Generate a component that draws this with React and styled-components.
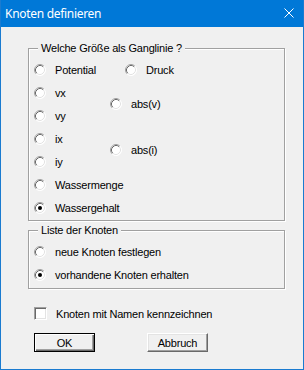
import styled, { createGlobalStyle } from "styled-components";

const GlobalStyle = createGlobalStyle`
  html, body {
    margin: 0;
    padding: 0;
    background: #f0f0f0;
  }
  * {
    box-sizing: border-box;
  }
`;

function RadioMark({ checked }) {
  return (
    <RadioSvg width="12" height="12" viewBox="0 0 12 12">
      <circle cx="6" cy="6" r="5.5" fill="#fff" />
      <path d="M2.11 9.89 A5.5 5.5 0 0 1 9.89 2.11" fill="none" stroke="#a0a0a0" />
      <path d="M9.89 2.11 A5.5 5.5 0 0 1 2.11 9.89" fill="none" stroke="#fff" />
      <path d="M2.82 9.18 A4.5 4.5 0 0 1 9.18 2.82" fill="none" stroke="#696969" />
      <path d="M9.18 2.82 A4.5 4.5 0 0 1 2.82 9.18" fill="none" stroke="#e3e3e3" />
      {checked && <circle cx="6" cy="6" r="2" fill="#000" />}
    </RadioSvg>
  );
}

function Radio({ label, checked, shift }) {
  return (
    <Option $shift={shift}>
      <RadioMark checked={checked} />
      <span>{label}</span>
    </Option>
  );
}

export default function App() {
  return (
    <>
      <GlobalStyle />
      <Window>
        <TitleBar>
          <Title>Knoten definieren</Title>
          <svg width="10" height="10" viewBox="0 0 10 10">
            <path d="M0.5 0.5 L9.5 9.5 M9.5 0.5 L0.5 9.5" stroke="#fff" strokeWidth="1" />
          </svg>
        </TitleBar>
        <Body>
          <Group>
            <Legend>Welche Größe als Ganglinie ?</Legend>
            <QuantityGrid>
              <Cell $row="1" $col="1"><Radio label="Potential" /></Cell>
              <Cell $row="2" $col="1"><Radio label="vx" /></Cell>
              <Cell $row="3" $col="1"><Radio label="vy" /></Cell>
              <Cell $row="4" $col="1"><Radio label="ix" /></Cell>
              <Cell $row="5" $col="1"><Radio label="iy" /></Cell>
              <Cell $row="6" $col="1"><Radio label="Wassermenge" /></Cell>
              <Cell $row="7" $col="1"><Radio label="Wassergehalt" checked /></Cell>
              <Cell $row="1" $col="2"><Radio label="Druck" shift={15} /></Cell>
              <Cell $row="2 / 4" $col="2"><Radio label="abs(v)" /></Cell>
              <Cell $row="4 / 6" $col="2"><Radio label="abs(i)" /></Cell>
            </QuantityGrid>
          </Group>
          <Group $second>
            <Legend>Liste der Knoten</Legend>
            <NodeList>
              <Radio label="neue Knoten festlegen" />
              <Radio label="vorhandene Knoten erhalten" checked />
            </NodeList>
          </Group>
          <CheckRow>
            <CheckBox />
            <span>Knoten mit Namen kennzeichnen</span>
          </CheckRow>
          <ButtonRow>
            <Button $default>OK</Button>
            <Button>Abbruch</Button>
          </ButtonRow>
        </Body>
      </Window>
    </>
  );
}

const Window = styled.div`
  width: 304px;
  height: 370px;
  display: flex;
  flex-direction: column;
  background: #f0f0f0;
  border: 1px solid #1a7bd0;
  border-top: none;
  font-family: "Liberation Sans", Arial, sans-serif;
  font-size: 11px;
  letter-spacing: -0.2px;
  color: #000;
`;

const TitleBar = styled.div`
  height: 27px;
  flex-shrink: 0;
  display: flex;
  align-items: center;
  justify-content: space-between;
  padding: 0 9px 1px 4px;
  background: #0078d7;
`;

const Title = styled.span`
  font-family: "Noto Sans", "Open Sans", sans-serif;
  font-size: 12px;
  letter-spacing: -0.3px;
  color: #fff;
`;

const Body = styled.div`
  display: flex;
  flex-direction: column;
  padding: 21px 0 0 27px;
`;

const Group = styled.div`
  position: relative;
  width: 257px;
  margin-top: ${(p) => (p.$second ? "9px" : "0")};
  padding: 9px 0 ${(p) => (p.$second ? "2px" : "1px")} 5px;
  border: 1px solid #a0a0a0;
  box-shadow: inset 1px 1px 0 #fff, 1px 1px 0 #fff;
`;

const Legend = styled.span`
  position: absolute;
  top: -8px;
  left: 9px;
  padding: 0 3px;
  line-height: 14px;
  background: #f0f0f0;
  white-space: nowrap;
`;

const QuantityGrid = styled.div`
  display: grid;
  grid-template-columns: 76px 1fr;
  grid-template-rows: repeat(7, 23px);
`;

const Cell = styled.div`
  grid-row: ${(p) => p.$row};
  grid-column: ${(p) => p.$col};
  display: flex;
  align-items: center;
`;

const NodeList = styled.div`
  display: grid;
  grid-template-rows: repeat(2, 23px);
`;

const Option = styled.label`
  display: flex;
  align-items: center;
  gap: 9px;
  height: 23px;
  margin-left: ${(p) => (p.$shift ? `${p.$shift}px` : "0")};
  white-space: nowrap;
`;

const RadioSvg = styled.svg`
  flex-shrink: 0;
  display: block;
`;

const CheckRow = styled.div`
  display: flex;
  align-items: center;
  gap: 9px;
  height: 13px;
  margin: 18px 0 0 6px;
`;

const CheckBox = styled.span`
  width: 13px;
  height: 13px;
  background: #fff;
  border: 1px solid;
  border-color: #a0a0a0 #fff #fff #a0a0a0;
  box-shadow: inset 1px 1px 0 #696969, inset -1px -1px 0 #e3e3e3;
`;

const ButtonRow = styled.div`
  display: flex;
  gap: 52px;
  margin: 13px 0 0 6px;
`;

const Button = styled.button`
  width: 61px;
  height: 19px;
  padding: 0;
  font-family: inherit;
  font-size: 11px;
  letter-spacing: inherit;
  color: #000;
  background: #f0f0f0;
  border: 1px solid;
  border-color: ${(p) => (p.$default ? "#000" : "#fff #696969 #696969 #fff")};
  box-shadow: ${(p) =>
    p.$default
      ? "inset 1px 1px 0 #fff, inset -1px -1px 0 #696969, inset -2px -2px 0 #a0a0a0"
      : "inset -1px -1px 0 #a0a0a0, inset 1px 1px 0 #e3e3e3"};
`;
